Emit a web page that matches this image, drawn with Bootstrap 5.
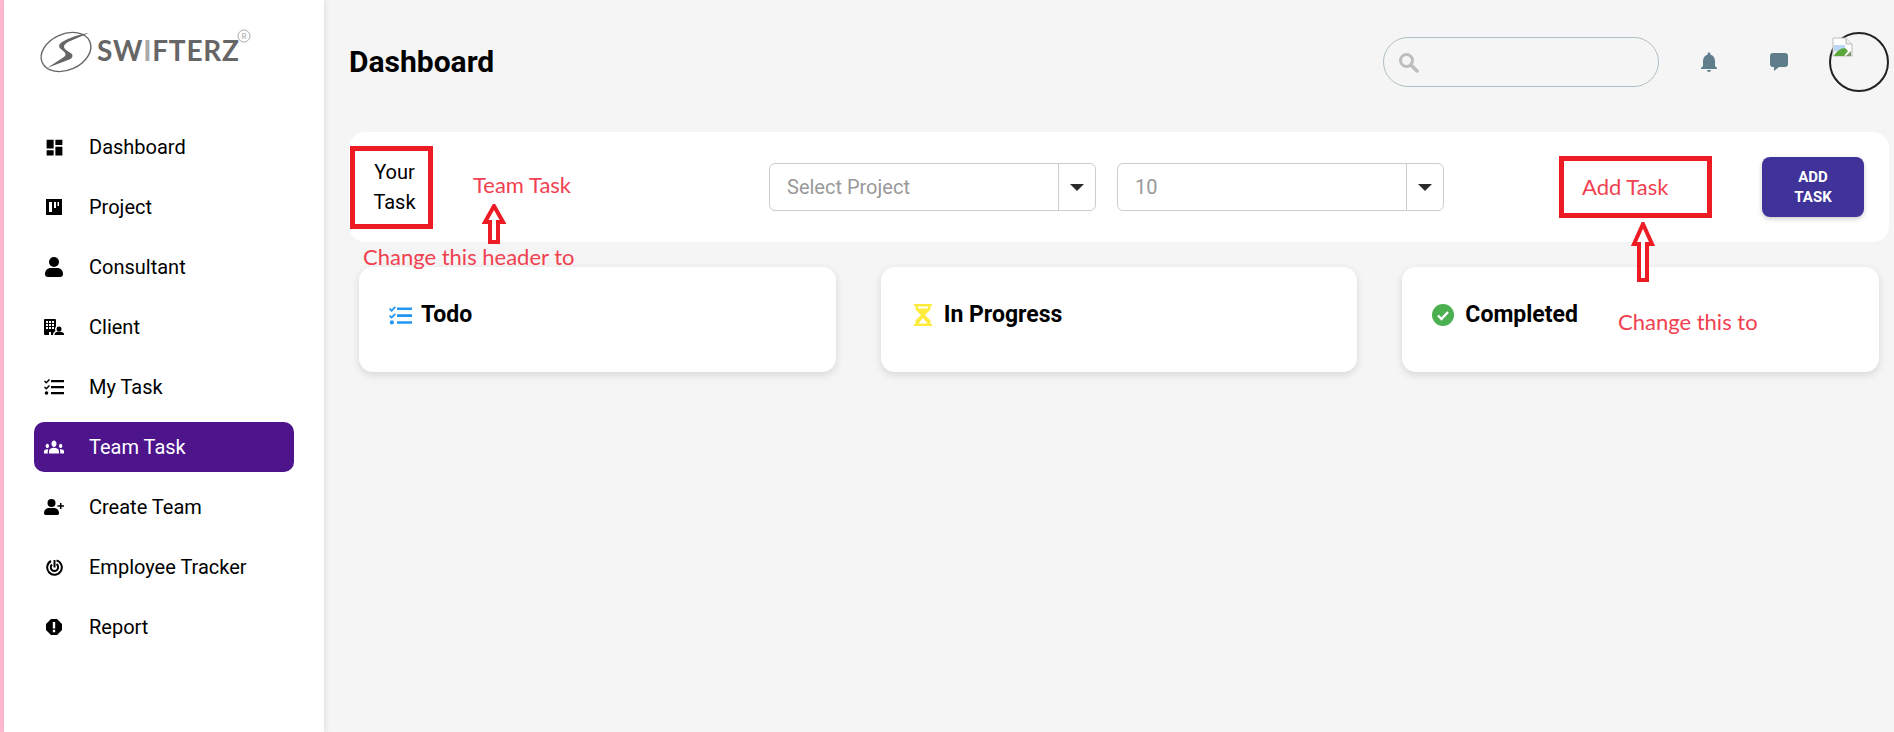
<!DOCTYPE html>
<html lang="en">
<head>
    <meta charset="UTF-8">
    <meta name="viewport" content="width=device-width, initial-scale=1.0">
    <title>Swifterz Dashboard</title>
    <link href="https://cdn.jsdelivr.net/npm/bootstrap@5.3.0/dist/css/bootstrap.min.css" rel="stylesheet">
    <style>
        body {
            font-family: Roboto, "Liberation Sans", sans-serif;
            background: #f5f5f5;
            color: #000;
            height: 732px;
            overflow: hidden;
        }
        .page-wrap {
            height: 732px;
            position: relative;
            border-left: 4px solid #ffb6d0;
        }
        .side-bar {
            width: 320px;
            flex-shrink: 0;
            background: #fff;
            box-shadow: 2px 0 5px rgba(0, 0, 0, .08);
            padding: 0 30px;
        }
        .logo-box {
            height: 122px;
            margin-left: -30px;
        }
        .side-link {
            height: 50px;
            margin-bottom: 10px;
            border-radius: 10px;
            color: #000;
            font-size: 20px;
            padding: 0;
        }
        .side-link:hover { color: #000; }
        .side-link.on, .side-link.on:hover {
            background: #4d148c;
            color: #fff;
        }
        .side-icon {
            width: 40px;
            margin-right: 15px;
        }
        .main-area {
            padding: 0 5px 0 25px;
            min-width: 0;
        }
        .top-row { height: 132px; padding-bottom: 8px; }
        .page-title { font-size: 30px; font-weight: 700; margin: 0; }
        .search-pill {
            width: 276px;
            height: 50px;
            border: 1px solid #b0bec5;
            border-radius: 25px;
            padding-left: 14px;
        }
        .top-icon { margin-left: 49px; }
        .top-icon.first { margin-left: 38px; }
        .avatar-ring {
            width: 60px;
            height: 60px;
            border: 2px solid #222;
            border-radius: 50%;
            margin-left: 41px;
            margin-top: -1px;
            padding: 3px 0 0 1px;
        }
        .filter-panel {
            height: 110px;
            background: #fff;
            border-radius: 16px;
            padding-left: 1px;
            padding-right: 25px;
        }
        .red-box {
            border: 5px solid #ed1c24;
            background: #fff;
        }
        .red-box.your {
            width: 83px;
            height: 83px;
            font-size: 20px;
            line-height: 30px;
            text-align: center;
            padding: 6px 0 0 6px;
        }
        .red-box.add {
            width: 153px;
            height: 62px;
            margin-left: 115px;
        }
        .pick-group { width: 327px; height: 48px; }
        .pick-group + .pick-group { margin-left: 21px; }
        .pick-group .form-control {
            font-size: 20px;
            color: #999;
            padding-left: 17px;
            border-color: #ccc;
            border-radius: 6px 0 0 6px;
            background: #fff;
        }
        .pick-group .form-control::placeholder { color: #999; }
        .pick-group .input-group-text {
            width: 38px;
            background: #fff;
            border-color: #ccc;
            border-radius: 0 6px 6px 0;
            justify-content: center;
            padding: 0;
        }
        .down-caret {
            border-left: 7px solid transparent;
            border-right: 7px solid transparent;
            border-top: 7px solid #2b2b2b;
        }
        .add-btn {
            width: 102px;
            height: 60px;
            margin-left: 50px;
            background: #3f3399;
            color: #fff;
            font-size: 15px;
            font-weight: 700;
            line-height: 20px;
            border: 0;
            border-radius: 8px;
            box-shadow: 0 2px 5px rgba(0, 0, 0, .2);
            padding: 0 20px;
        }
        .add-btn:hover { background: #3f3399; color: #fff; }
        .status-row { padding: 25px 10px 0; gap: 45px; }
        .status-card {
            flex: 1 1 0;
            height: 105px;
            border: 0;
            border-radius: 14px;
            box-shadow: 0 3px 8px rgba(0, 0, 0, .12);
            padding: 36px 0 0 30px;
        }
        .status-title { font-size: 23px; font-weight: 700; margin: 0; line-height: 24px; }
        .status-title svg { margin-right: 9px; }
        .status-title svg.wide-gap { margin-right: 11px; }
        .note-text {
            position: absolute;
            font-family: Lato, "Open Sans", sans-serif;
            color: #f1404f;
            font-size: 22px;
            line-height: 24px;
            white-space: nowrap;
        }
        .note-team { left: 473px; top: 173px; }
        .note-header { left: 363px; top: 245px; }
        .note-add { left: 1582px; top: 175px; }
        .note-change { left: 1618px; top: 310px; }
        .note-arrow { position: absolute; }
        .arrow-team { left: 482px; top: 204px; }
        .arrow-add { left: 1631px; top: 222px; }
    </style>
</head>
<body>

<div class="page-wrap d-flex">
    <!-- Sidebar -->
    <aside class="side-bar">
        <div class="logo-box">
            <svg width="250" height="90" viewBox="0 0 250 90">
                <ellipse cx="62" cy="52" rx="26" ry="18" transform="rotate(-24 62 52)" fill="none" stroke="#666" stroke-width="1.4"/>
                <path d="M85 33 L64 42 Q57 46 62 50 L68 54 Q70 58 64 60 L43 68 L60 57 Q64 54 58 50 Q52 46 58 42 Q70 35 85 33Z" fill="#666"/>
                <text x="93" y="61" font-family="Lato, sans-serif" font-size="28" font-weight="700" fill="#666" textLength="142" lengthAdjust="spacing">SW<tspan fill="#aaa">I</tspan>FTERZ</text>
                <circle cx="240" cy="36" r="6" fill="none" stroke="#aaa" stroke-width="1"/>
                <text x="240" y="39" font-family="Lato, sans-serif" font-size="8" fill="#aaa" text-anchor="middle">R</text>
            </svg>
        </div>
        <nav class="nav flex-column">
            <a class="nav-link side-link d-flex align-items-center" href="#">
                <span class="side-icon d-flex justify-content-center">
                    <svg width="21" height="21" viewBox="0 0 24 24" fill="currentColor"><path d="M3 13h8V3H3v10zm0 8h8v-6H3v6zm10 0h8V11h-8v10zm0-18v6h8V3h-8z"/></svg>
                </span>Dashboard
            </a>
            <a class="nav-link side-link d-flex align-items-center" href="#">
                <span class="side-icon d-flex justify-content-center">
                    <svg width="16" height="16" viewBox="0 0 16 16" fill="currentColor"><path fill-rule="evenodd" d="M0 0h16v16H0zM3 3v10h3V3zM8 3v6h2V3zM11.500 3v4h1.500V3z"/></svg>
                </span>Project
            </a>
            <a class="nav-link side-link d-flex align-items-center" href="#">
                <span class="side-icon d-flex justify-content-center">
                    <svg width="18" height="20" viewBox="0 0 18 20" fill="currentColor"><circle cx="9" cy="5" r="5"/><path d="M0 17c0-4 3-6 5.500-6h7c2.500 0 5.500 2 5.500 6 0 2-1 3-3 3H3c-2 0-3-1-3-3z"/></svg>
                </span>Consultant
            </a>
            <a class="nav-link side-link d-flex align-items-center" href="#">
                <span class="side-icon d-flex justify-content-center">
                    <svg width="20" height="16" viewBox="0 0 20 16" fill="currentColor"><path fill-rule="evenodd" d="M1 0h10a1 1 0 0 1 1 1v6.500a4 4 0 0 0-1 2.500c0 1 .3 1.500.5 2-1 .5-2.500 1.500-2.500 3.500v.5H7v-3H5v3H1a1 1 0 0 1-1-1V1a1 1 0 0 1 1-1zM2 2v2h2V2zM5 2v2h2V2zM8 2v2h2V2zM2 5v2h2V5zM5 5v2h2V5zM8 5v2h2V5zM2 8v2h2V8zM5 8v2h2V8zM8 8v2h2V8z"/><circle cx="15" cy="10" r="2.500"/><path d="M10.500 16v-.8c0-1.800 2.500-2.700 4.500-2.700s5 .9 5 2.700v.8z"/></svg>
                </span>Client
            </a>
            <a class="nav-link side-link d-flex align-items-center" href="#">
                <span class="side-icon d-flex justify-content-center">
                    <svg width="20" height="16" viewBox="0 0 20 16" fill="currentColor"><path d="M7 1h13v2.200H7zM7 7h13v2.200H7zM7 13h13v2.200H7z"/><path d="M.5 2l1.800 1.800L5.500.5M.5 8l1.800 1.800L5.500 6.500" fill="none" stroke="currentColor" stroke-width="1.500"/><circle cx="2.500" cy="14" r="1.800"/></svg>
                </span>My Task
            </a>
            <a class="nav-link side-link on d-flex align-items-center" href="#">
                <span class="side-icon d-flex justify-content-center">
                    <svg width="20" height="14" viewBox="0 5.500 24 13" preserveAspectRatio="none" fill="currentColor"><path d="M12 12.750c1.630 0 3.070.39 4.240.9 1.080.48 1.760 1.560 1.760 2.730V18H6v-1.610c0-1.180.68-2.260 1.760-2.730 1.170-.52 2.610-.91 4.240-.91zM4 13c1.100 0 2-.9 2-2s-.9-2-2-2-2 .9-2 2 .9 2 2 2zm1.130 1.100c-.37-.06-.74-.1-1.130-.1-.99 0-1.930.21-2.780.58C.48 14.900 0 15.620 0 16.430V18h4.500v-1.610c0-.83.23-1.610.63-2.290zM20 13c1.100 0 2-.9 2-2s-.9-2-2-2-2 .9-2 2 .9 2 2 2zm4 3.430c0-.81-.48-1.530-1.220-1.850-.85-.37-1.790-.58-2.780-.58-.39 0-.76.04-1.130.1.4.68.63 1.460.63 2.290V18H24v-1.570zM12 6c1.660 0 3 1.340 3 3s-1.340 3-3 3-3-1.340-3-3 1.340-3 3-3z"/></svg>
                </span>Team Task
            </a>
            <a class="nav-link side-link d-flex align-items-center" href="#">
                <span class="side-icon d-flex justify-content-center">
                    <svg width="20" height="16" viewBox="0 0 20 16" fill="currentColor"><circle cx="7.500" cy="4" r="4"/><path d="M0 14c0-3 2.500-5 4.500-5h6c2 0 4.500 2 4.500 5 0 1.500-.8 2-2 2H2c-1.200 0-2-.5-2-2z"/><path d="M16 4h1.500v2.200H20v1.500h-2.500V10H16V7.700h-2.500V6.200H16z"/></svg>
                </span>Create Team
            </a>
            <a class="nav-link side-link d-flex align-items-center" href="#">
                <span class="side-icon d-flex justify-content-center">
                    <svg width="17" height="17" viewBox="0 0 17 17" fill="none" stroke="currentColor"><path d="M10.500 1.400A7.300 7.300 0 1 1 5 2" stroke-width="2"/><path d="M10.500 5.200A3.700 3.700 0 1 1 6 5.500" stroke-width="2"/><path d="M8.500 1v7.500" stroke-width="2"/></svg>
                </span>Employee Tracker
            </a>
            <a class="nav-link side-link d-flex align-items-center" href="#">
                <span class="side-icon d-flex justify-content-center">
                    <svg width="16" height="16" viewBox="0 0 16 16" fill="currentColor"><path fill-rule="evenodd" d="M5 0h6l5 5v6l-5 5H5l-5-5V5zM6.800 3v6.500h2.400V3zM6.800 10.800v2.400h2.400v-2.400z"/></svg>
                </span>Report
            </a>
        </nav>
    </aside>

    <!-- Main content -->
    <main class="main-area flex-grow-1">
        <div class="top-row d-flex align-items-center">
            <h1 class="page-title flex-grow-1">Dashboard</h1>
            <div class="search-pill d-flex align-items-center">
                <svg width="21" height="21" viewBox="0 0 21 21" fill="none" stroke="#bdbdbd"><circle cx="8.500" cy="8.500" r="6" stroke-width="3"/><path d="M13 13l6 6" stroke-width="3.500" stroke-linecap="round"/></svg>
            </div>
            <svg class="top-icon first" width="24" height="24" viewBox="0 0 24 24" fill="#607d8b"><path d="M12 22c1.100 0 2-.9 2-2h-4c0 1.100.89 2 2 2zm6-6v-5c0-3.070-1.640-5.640-4.500-6.320V4c0-.83-.67-1.500-1.500-1.500s-1.500.67-1.500 1.500v.68C7.630 5.360 6 7.920 6 11v5l-2 2v1h16v-1l-2-2z"/></svg>
            <svg class="top-icon" width="18" height="18" viewBox="0 0 18 18" fill="#607d8b"><path d="M3 0h12a3 3 0 0 1 3 3v8a3 3 0 0 1-3 3H9l-5 4v-4H3a3 3 0 0 1-3-3V3a3 3 0 0 1 3-3z"/></svg>
            <div class="avatar-ring">
                <svg class="d-block" width="21" height="20" viewBox="0 0 21 20"><path d="M1 1h13l6 6v12H1z" fill="#fff" stroke="#bbb"/><path d="M14 1v6h6" fill="#eee" stroke="#bbb"/><path d="M2 8h11v3L2 15z" fill="#bcd6f7"/><path d="M2 19c2-5 7-8 11-8l3 3-4 5z" fill="#5aa83c"/><path d="M14 19l5-5v5z" fill="#7c9a6a"/></svg>
            </div>
        </div>

        <div class="filter-panel d-flex align-items-center">
            <div class="red-box your">Your Task</div>
            <div class="input-group pick-group flex-nowrap ms-auto">
                <input class="form-control" type="text" placeholder="Select Project">
                <span class="input-group-text"><span class="down-caret"></span></span>
            </div>
            <div class="input-group pick-group flex-nowrap">
                <input class="form-control" type="text" value="10">
                <span class="input-group-text"><span class="down-caret"></span></span>
            </div>
            <div class="red-box add"></div>
            <button class="btn add-btn" type="button">ADD TASK</button>
        </div>

        <div class="status-row d-flex">
            <div class="card status-card">
                <h5 class="status-title d-flex align-items-center">
                    <svg width="23" height="19" viewBox="0 0 20 16" fill="#2196f3"><path d="M7 1h13v2.200H7zM7 7h13v2.200H7zM7 13h13v2.200H7z"/><path d="M.5 2l1.800 1.800L5.500.5M.5 8l1.800 1.800L5.500 6.500" fill="none" stroke="#2196f3" stroke-width="1.500"/><circle cx="2.500" cy="14" r="1.800"/></svg>
                    Todo
                </h5>
            </div>
            <div class="card status-card">
                <h5 class="status-title d-flex align-items-center">
                    <svg width="24" height="22" viewBox="0 0 24 22" fill="#ffeb3b"><path fill-rule="evenodd" d="M3 0h18v2h-1.500v3.500L14 11l5.500 5.500V20H21v2H3v-2h1.500v-3.500L10 11 4.500 5.500V2H3zM7 2.500v2h10v-2zM12 14l-4.500 5.500h9z"/></svg>
                    In Progress
                </h5>
            </div>
            <div class="card status-card">
                <h5 class="status-title d-flex align-items-center">
                    <svg class="wide-gap" width="22" height="22" viewBox="0 0 22 22"><circle cx="11" cy="11" r="11" fill="#4caf50"/><path d="M6 11.500l3.500 3.500L16 8" fill="none" stroke="#fff" stroke-width="2.400"/></svg>
                    Completed
                </h5>
            </div>
        </div>
    </main>
</div>

<!-- Red annotations drawn over the screenshot -->
<span class="note-text note-team">Team Task</span>
<span class="note-text note-header">Change this header to</span>
<span class="note-text note-add">Add Task</span>
<span class="note-text note-change">Change this to</span>
<svg class="note-arrow arrow-team" width="24" height="40" viewBox="0 0 24 40"><path d="M12 2L21 18H16V38H8V18H3Z" fill="#fff" stroke="#ed1c24" stroke-width="4"/></svg>
<svg class="note-arrow arrow-add" width="24" height="60" viewBox="0 0 24 60"><path d="M12 2L21 22H16V58H8V22H3Z" fill="#fff" stroke="#ed1c24" stroke-width="4"/></svg>

<script src="https://cdn.jsdelivr.net/npm/bootstrap@5.3.0/dist/js/bootstrap.bundle.min.js"></script>
</body>
</html>
